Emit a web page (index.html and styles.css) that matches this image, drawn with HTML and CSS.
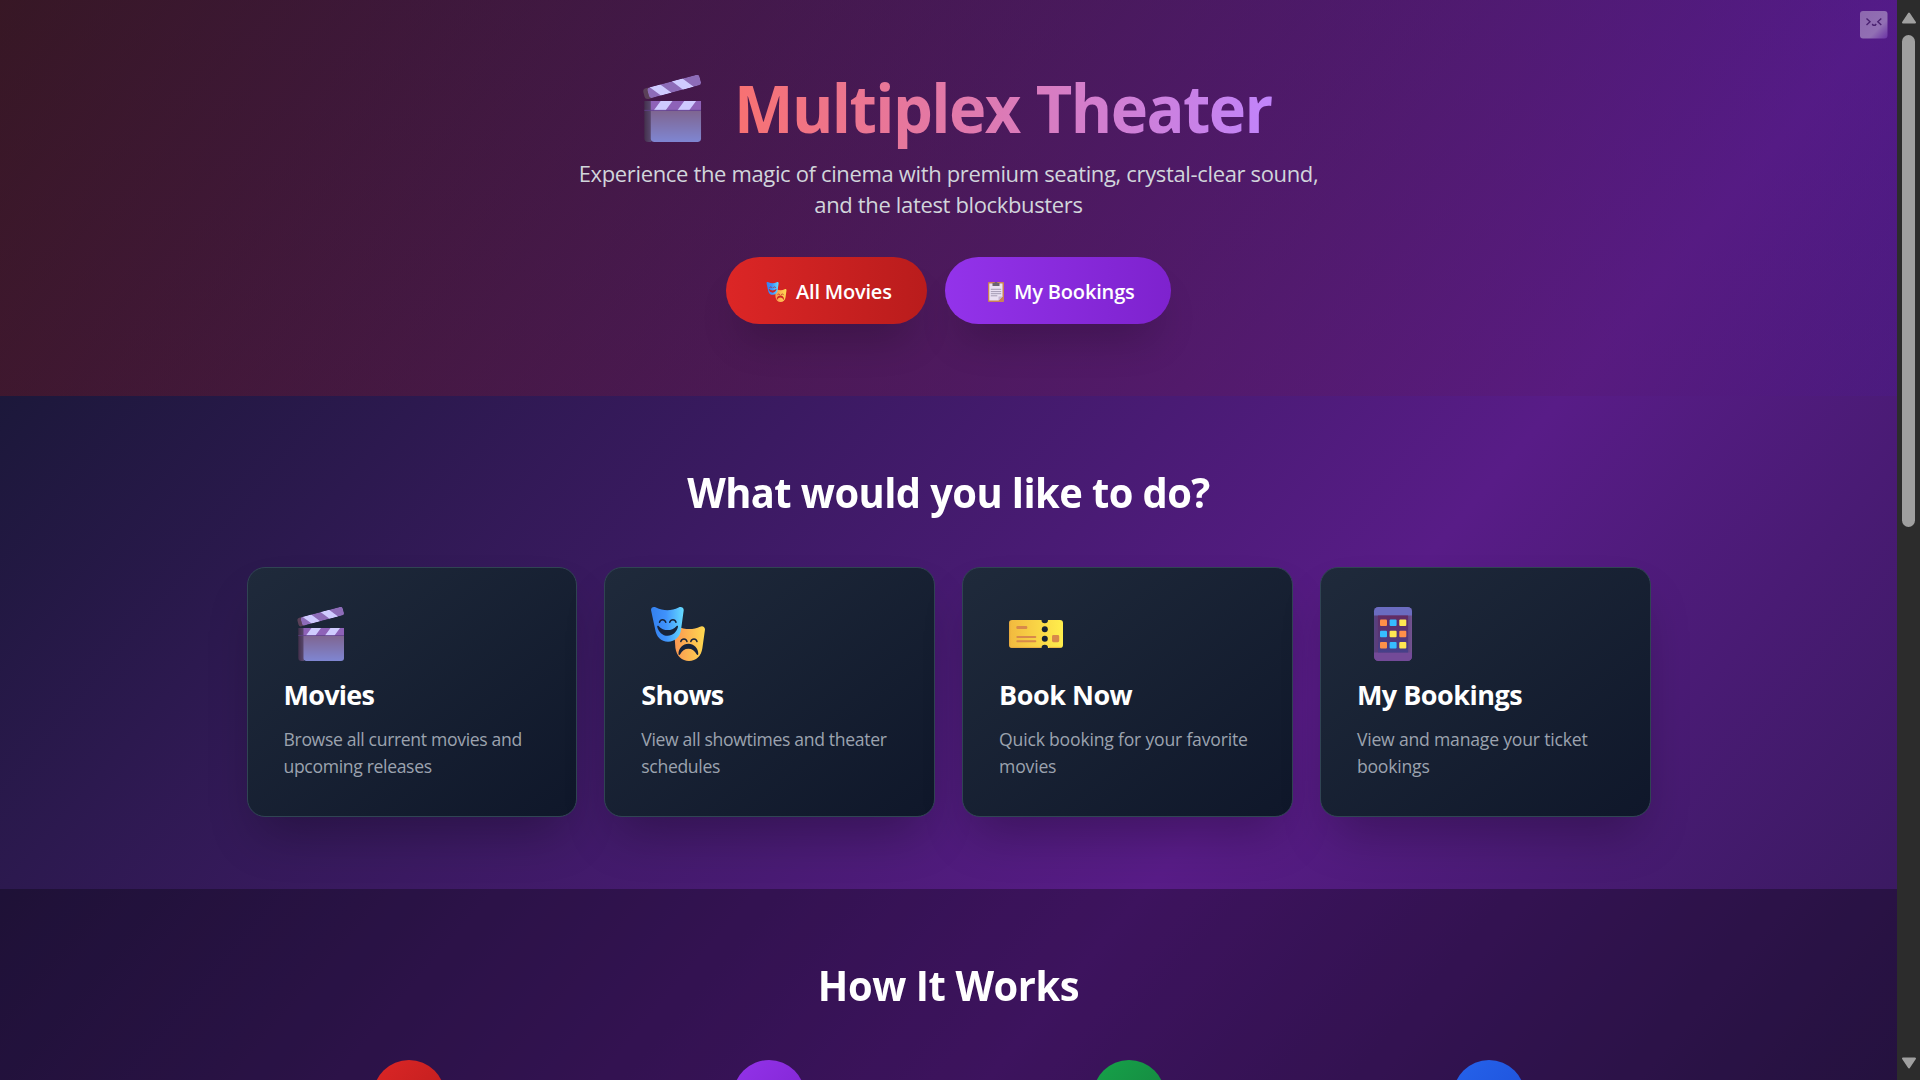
FILE: index.html
```html
<!DOCTYPE html>
<html lang="en">
<head>
<meta charset="utf-8">
<title>Multiplex Theater</title>
<link rel="stylesheet" href="styles.css">
</head>
<body>
<svg class="defs" width="0" height="0" aria-hidden="true">
  <defs>
    <linearGradient id="slate" x1="0" y1="0" x2="0" y2="1"><stop offset="0" stop-color="#7f6590"/><stop offset="1" stop-color="#7f86d2"/></linearGradient>
    <linearGradient id="side" x1="0" y1="0" x2="1" y2="0"><stop offset="0" stop-color="#43304c"/><stop offset="1" stop-color="#5a4a70"/></linearGradient>
    <linearGradient id="blue" x1="0" y1="0" x2="1" y2="0"><stop offset="0" stop-color="#3480ee"/><stop offset=".45" stop-color="#3f92fc"/><stop offset="1" stop-color="#66dcff"/></linearGradient>
    <linearGradient id="gold" x1="0" y1="0" x2="1" y2="0"><stop offset="0" stop-color="#fb9552"/><stop offset="1" stop-color="#fed950"/></linearGradient>
    <linearGradient id="ticketFill" x1="0" y1="0" x2="1" y2="0"><stop offset="0" stop-color="#f2b93f"/><stop offset="1" stop-color="#ffee4c"/></linearGradient>
    <linearGradient id="screen" x1="0" y1="0" x2="0" y2="1"><stop offset="0" stop-color="#632b62"/><stop offset="1" stop-color="#46408a"/></linearGradient>
    <linearGradient id="body" x1="0" y1="0" x2="1" y2="0"><stop offset="0" stop-color="#56427f"/><stop offset=".12" stop-color="#5d3a78"/><stop offset=".88" stop-color="#5d4484"/><stop offset="1" stop-color="#755490"/></linearGradient>
    <linearGradient id="face" x1="0" y1="0" x2="1" y2="1"><stop offset="0" stop-color="#8d68ae"/><stop offset=".65" stop-color="#9270b4"/><stop offset="1" stop-color="#6a32a4"/></linearGradient>
    <clipPath id="arm"><rect x="3.500" y="-4.400" width="43.500" height="8.800" rx="2.600"/></clipPath>

    <symbol id="clapper" viewBox="0 0 54 54">
      <g transform="translate(4 15.700) rotate(-15)">
        <rect x="0" y="-4.400" width="9" height="8.800" rx="2.600" fill="#5a4058"/>
        <g clip-path="url(#arm)">
          <rect x="3.500" y="-4.400" width="43.500" height="8.800" fill="#8d6cb8"/>
          <path d="M6-4.400h8.800l7 8.800H13zM24.500-4.400h8.800l7 8.800h-8.800z" fill="#cfcbff"/>
        </g>
      </g>
      <path d="M4.300 21H10v33H7.500a3.200 3.200 0 0 1-3.200-3.200z" fill="url(#side)"/>
      <path d="M9.500 28.500H50V51a3 3 0 0 1-3 3H12.500a3 3 0 0 1-3-3z" fill="url(#slate)"/>
      <path d="M9.500 21H50v7.800H9.500z" fill="#8e62b8"/>
      <path d="M17.500 21H27l-5.500 7.500H12zM36.500 21H46l-5.500 7.500H31z" fill="#cfcbff"/>
      <path d="M4.300 28.500H50" stroke="#60408c" stroke-width=".7"/>
    </symbol>

    <symbol id="masks" viewBox="0 0 54 54">
      <path d="M23 21.500c0-2 2-3 4-1.800 7 3.200 16 3 22 0 2.600-1.500 5 .3 5 2.800l-2.600 18.500C50.400 49 45 54 38 54s-12.500-5-13.600-13z" fill="url(#gold)"/>
      <path d="M0 3C0 .6 2.400-.7 5 .6c7.500 3.700 15.500 3.600 22.600 0 2.600-1.300 5.300.2 5.100 2.700l-2.600 19C29.300 30 24 34.700 17 34.700S5.200 30 4.100 22z" fill="url(#blue)"/>
      <g fill="none" stroke="#17233a" stroke-width="1.500" stroke-linecap="round">
        <path d="M8.500 15.300c1-3.300 5-3.300 6.300 0M18.700 15.300c1.200-3.300 5.300-3.300 6.300 0M29.800 34.500c1.200-3.200 5.200-3.200 6.200 0M39.800 34.500c1.200-3.200 5.200-3.200 6.200 0"/>
      </g>
      <path d="M6.200 19.700c-.2-1 1-1.200 1.600-.5 4.700 5.200 13 5.200 17.600 0 .7-.7 1.800-.5 1.600.6-1 5-5.400 9-10.400 9s-9.300-4-10.400-9.100zM27.500 47c-.2-5.800 4.500-10.300 9.900-10.300S47.500 41.200 47.300 47c0 1.300-1.200 1.500-1.700.3-1.800-3.600-4.500-5.600-8.200-5.600s-6.500 2-8.200 5.600c-.6 1.200-1.700 1-1.700-.3z" fill="#17233a"/>
    </symbol>

    <symbol id="masks-small" viewBox="0 0 54 54">
      <path d="M23 21.500c0-2 2-3 4-1.800 7 3.200 16 3 22 0 2.600-1.500 5 .3 5 2.800l-2.600 18.500C50.400 49 45 54 38 54s-12.500-5-13.600-13z" fill="url(#gold)"/>
      <path d="M0 3C0 .6 2.400-.7 5 .6c7.500 3.700 15.500 3.600 22.600 0 2.600-1.300 5.300.2 5.100 2.700l-2.600 19C29.300 30 24 34.700 17 34.700S5.200 30 4.100 22z" fill="url(#blue)"/>
      <g fill="none" stroke="#b0242c" stroke-width="1.800" stroke-linecap="round">
        <path d="M8.500 15.300c1-3.300 5-3.300 6.300 0M18.700 15.300c1.200-3.300 5.300-3.300 6.300 0M29.800 34.500c1.200-3.200 5.200-3.200 6.200 0M39.800 34.500c1.200-3.200 5.200-3.200 6.200 0"/>
      </g>
      <path d="M6.200 19.700c-.2-1 1-1.200 1.600-.5 4.700 5.200 13 5.200 17.600 0 .7-.7 1.800-.5 1.600.6-1 5-5.400 9-10.400 9s-9.300-4-10.400-9.100zM27.500 47c-.2-5.800 4.500-10.300 9.900-10.300S47.500 41.200 47.300 47c0 1.300-1.200 1.500-1.700.3-1.800-3.600-4.500-5.600-8.200-5.600s-6.500 2-8.200 5.600c-.6 1.200-1.700 1-1.700-.3z" fill="#d32424"/>
    </symbol>

    <symbol id="ticket" viewBox="0 0 54 54">
      <path d="M3 13h29.500a3.200 3.200 0 0 0 6.500 0H51a3 3 0 0 1 3 3v22a3 3 0 0 1-3 3H39a3.200 3.200 0 0 0-6.500 0H3a3 3 0 0 1-3-3V16a3 3 0 0 1 3-3z" fill="url(#ticketFill)"/>
      <path d="M.7 15v24M2 40.400h30M40 40.400h12" stroke="#dfa040" stroke-width="1" fill="none" opacity=".7"/>
      <g fill="#182235"><circle cx="35.800" cy="22.300" r="3"/><circle cx="35.800" cy="31.700" r="3"/></g>
      <g fill="#d8894a"><rect x="7.300" y="19" width="11" height="3" rx="1.200"/><rect x="7.300" y="29" width="20" height="2" rx="1"/><rect x="7.300" y="33.200" width="20" height="2" rx="1"/><rect x="43" y="28" width="7.200" height="7.200" rx="1.400"/></g>
    </symbol>

    <symbol id="phone" viewBox="0 0 54 54">
      <rect x="8" y="0" width="38" height="54" rx="4.500" fill="url(#body)"/>
      <path d="M8 8.500v-4A4.500 4.500 0 0 1 12.500 0h29A4.500 4.500 0 0 1 46 4.500v4z" fill="#6b6cc0"/>
      <path d="M8 45.500v4a4.500 4.500 0 0 0 4.500 4.500h29a4.500 4.500 0 0 0 4.500-4.500v-4z" fill="#734a98"/>
      <rect x="12" y="8.500" width="30" height="37" fill="url(#screen)"/>
      <g fill="#ff9048"><rect x="14" y="12.500" width="7" height="6.500" rx="1"/><rect x="33.300" y="23.700" width="7" height="6.500" rx="1"/><rect x="14" y="35" width="7" height="6.500" rx="1"/></g>
      <g fill="#36bdff"><rect x="23.600" y="12.500" width="7" height="6.500" rx="1"/><rect x="14" y="23.700" width="7" height="6.500" rx="1"/><rect x="23.600" y="35" width="7" height="6.500" rx="1"/></g>
      <g fill="#ffe852"><rect x="33.300" y="12.500" width="7" height="6.500" rx="1"/><rect x="23.600" y="23.700" width="7" height="6.500" rx="1"/><rect x="33.300" y="35" width="7" height="6.500" rx="1"/></g>
    </symbol>

    <symbol id="clipboard" viewBox="0 0 16 20">
      <rect width="16" height="20" rx=".8" fill="#c98356"/>
      <path d="M1.300 1.500h13.200v13l-4 4H1.300z" fill="#e9e0f2"/>
      <path d="M14.500 14.500h-4v4z" fill="#c5b6d3"/>
      <path d="M4.500 1h1.800a1.800 1.800 0 0 1 3.400 0h1.800v3h-7z" fill="#6b6370"/>
      <path d="M2.800 7.300h10.400M2.800 9.600h10.400M2.800 11.700h10.400M2.800 13.800h6.500" stroke="#9c93ab" stroke-width=".9"/>
    </symbol>
  </defs>
</svg>

<div class="window">
  <div class="page">
    <main class="content">
      <section class="hero">
        <h1 class="title"><svg class="title-icon"><use href="#clapper"/></svg><span class="title-text">Multiplex Theater</span></h1>
        <p class="subtitle">Experience the magic of cinema with premium seating, crystal-clear sound,<br>and the latest blockbusters</p>
        <div class="actions">
          <a class="button button-red"><svg class="button-icon masks"><use href="#masks-small"/></svg><span class="label-movies">All Movies</span></a>
          <a class="button button-purple"><svg class="button-icon clipboard"><use href="#clipboard"/></svg><span class="label-bookings">My Bookings</span></a>
        </div>
      </section>

      <section class="section">
        <h2 class="heading">What would you like to do?</h2>
        <div class="cards">
          <article class="card">
            <svg class="card-icon card-icon-clapper"><use href="#clapper"/></svg>
            <h3 class="card-title">Movies</h3>
            <p class="card-text">Browse all current movies and<br>upcoming releases</p>
          </article>
          <article class="card">
            <svg class="card-icon"><use href="#masks"/></svg>
            <h3 class="card-title">Shows</h3>
            <p class="card-text">View all showtimes and theater<br>schedules</p>
          </article>
          <article class="card">
            <svg class="card-icon"><use href="#ticket"/></svg>
            <h3 class="card-title wide">Book Now</h3>
            <p class="card-text loose">Quick booking for your favorite<br>movies</p>
          </article>
          <article class="card">
            <svg class="card-icon"><use href="#phone"/></svg>
            <h3 class="card-title wide">My Bookings</h3>
            <p class="card-text loose">View and manage your ticket<br>bookings</p>
          </article>
        </div>
      </section>

      <section class="section section-dark">
        <h2 class="heading heading-steps">How It Works</h2>
        <div class="steps">
          <div class="step step-red"></div>
          <div class="step step-purple"></div>
          <div class="step step-green"></div>
          <div class="step step-blue"></div>
        </div>
      </section>
    </main>
    <svg class="badge" viewBox="0 0 28 28">
      <rect width="27.500" height="27.500" rx="3" fill="url(#face)"/>
      <path d="M6.500 7.500l3.500 3.300-3.500 3.200M21.300 7.500l-3.500 3.300 3.500 3.200M12.200 13l1 1.300h2l1-1.300" fill="none" stroke="#4a2170" stroke-width="1.400"/>
    </svg>
  </div>
  <div class="scrollbar">
    <svg class="arrow" viewBox="0 0 16 12"><path d="M8 1.500L14 10.500H2z" fill="#a0a0a0" stroke="#a0a0a0" stroke-width="2" stroke-linejoin="round"/></svg>
    <div class="thumb"></div>
    <svg class="arrow arrow-down" viewBox="0 0 16 12"><path d="M8 10.500L14 1.500H2z" fill="#a0a0a0" stroke="#a0a0a0" stroke-width="2" stroke-linejoin="round"/></svg>
  </div>
</div>
</body>
</html>
```
FILE: styles.css
```css
* { box-sizing: border-box; margin: 0; padding: 0; }

body {
  height: 100vh;
  overflow: hidden;
  font-family: "Open Sans", "Noto Sans", sans-serif;
  color: #fff;
  background: #0f172a;
}

.defs { position: absolute; }

.window { display: flex; height: 100vh; overflow: hidden; }

.page { position: relative; flex: 1; height: 100%; overflow: hidden; }

.content {
  height: 2250px;
  background: linear-gradient(to bottom right, #0f172a, #581c87, #0f172a);
}

.hero {
  height: 396px;
  padding-top: 70px;
  display: flex;
  flex-direction: column;
  align-items: center;
  background: linear-gradient(to right, rgba(115, 23, 29, .4), rgba(90, 25, 112, .4) 80%, rgba(76, 26, 138, .4));
}

.title {
  display: flex;
  align-items: flex-start;
  width: 619px;
  height: 74px;
  font-size: 67px;
  font-weight: 700;
  line-height: 74px;
}

.title-icon { flex: none; width: 67px; height: 67px; margin: 5px 28px 0 0; }

.title-text {
  flex: none;
  height: 88px;
  letter-spacing: -1.68px;
  word-spacing: 1.5px;
  padding-right: 4px;
  color: transparent;
  background: linear-gradient(to right, #f87171, #c084fc);
  -webkit-background-clip: text;
  background-clip: text;
  transform: scaleX(.942);
  transform-origin: left;
}

.subtitle {
  margin-top: 14px;
  font-size: 22px;
  line-height: 31px;
  letter-spacing: -.35px;
  text-align: center;
  color: #d1d5db;
}

.actions { display: flex; gap: 18px; margin-top: 37px; }

.button {
  display: flex;
  align-items: center;
  height: 67px;
  border-radius: 34px;
  font-size: 20px;
  font-weight: 600;
  line-height: 30px;
  box-shadow: 0 27px 40px -14px rgba(0, 0, 0, .22);
}

.button-red { width: 201px; padding-left: 40px; background: linear-gradient(to right, #dc2626, #b91c1c); }
.button-purple { width: 226px; padding-left: 43px; background: linear-gradient(to right, #9333ea, #7e22ce); }

.button-icon { height: 20px; margin-top: 3px; }
.masks { width: 21px; margin-right: 9px; }
.clipboard { width: 16px; margin-right: 10px; }
.label-movies { letter-spacing: -.2px; margin-top: 3px; }
.label-bookings { letter-spacing: -.17px; margin-top: 3px; }

.section { height: 493px; padding-top: 73px; }
.section-dark { height: 700px; background: rgba(0, 0, 0, .3); }

.heading {
  font-size: 41px;
  font-weight: 700;
  line-height: 46px;
  letter-spacing: -.6px;
  text-align: center;
  transform: scaleX(.973);
}
.heading-steps { letter-spacing: -.45px; }

.cards {
  width: 1404px;
  margin: 52px 0 0 246.5px;
  display: grid;
  grid-template-columns: repeat(4, 1fr);
  gap: 27.2px;
}

.card {
  height: 250px;
  padding: 39px 36px 0;
  border: 1px solid #304453;
  border-radius: 18px;
  background: linear-gradient(to bottom right, #1f2a3b, #0f172a);
  box-shadow: 0 27px 50px -13px rgba(0, 0, 0, .27);
}

.card-icon { display: block; width: 54px; height: 54px; margin-left: 9.5px; }
.card-icon-clapper { margin-left: 10px; }

.card-title {
  margin-top: 16px;
  font-size: 27px;
  font-weight: 700;
  line-height: 36px;
  letter-spacing: -.75px;
}
.card-title.wide { letter-spacing: -.5px; }

.card-text {
  margin-top: 13px;
  font-size: 17.6px;
  line-height: 27px;
  letter-spacing: -.34px;
  white-space: nowrap;
  color: #9ca3af;
}
.card-text.loose { letter-spacing: -.2px; }

.steps {
  width: 1404px;
  margin: 52px auto 0;
  display: grid;
  grid-template-columns: repeat(4, 1fr);
  gap: 36px;
}

.step { justify-self: center; width: 72px; height: 72px; border-radius: 50%; }
.step-red { background: linear-gradient(to bottom right, #dc2626, #b91c1c); }
.step-purple { background: linear-gradient(to bottom right, #9333ea, #7e22ce); }
.step-green { background: linear-gradient(to bottom right, #16a34a, #15803d); }
.step-blue { background: linear-gradient(to bottom right, #2563eb, #1d4ed8); }

.badge { position: absolute; top: 11px; right: 9px; width: 28px; height: 28px; }

.scrollbar {
  width: 23px;
  display: flex;
  flex-direction: column;
  align-items: center;
  padding: 12px 0 11px;
  background: #2c2c2c;
}
.arrow { width: 16px; height: 12px; }
.thumb { width: 13px; height: 492px; margin-top: 11px; border-radius: 7px; background: #9f9f9f; }
.arrow-down { margin-top: auto; }
```
